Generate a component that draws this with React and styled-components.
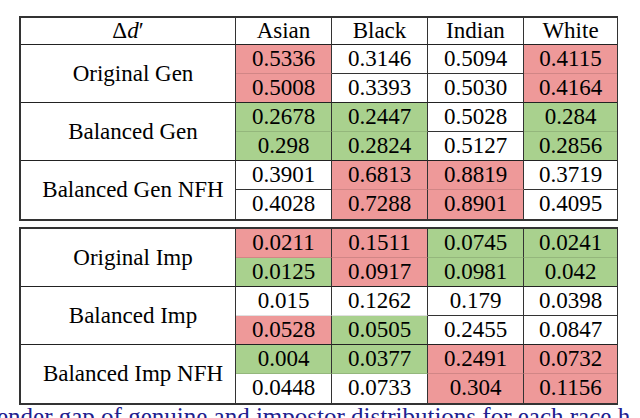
import React from "react";
import styled, { createGlobalStyle } from "styled-components";

const Global = createGlobalStyle`
  html, body {
    margin: 0;
    padding: 0;
    background: #ffffff;
  }
  body {
    width: 640px;
    height: 418px;
    overflow: hidden;
    font-family: "Liberation Serif", serif;
  }
`;

const FILLS = {
  r: "#ee9999",
  g: "#a9d18e",
  w: "#ffffff",
};

const Page = styled.div`
  width: 640px;
  height: 418px;
  overflow: hidden;
  display: flex;
  flex-direction: column;
  font-family: "Liberation Serif", serif;
`;

const TopCaption = styled.div`
  height: 16px;
  overflow: hidden;
  flex-shrink: 0;
`;

const BottomCaption = styled.div`
  flex: 1;
  min-height: 0;
  overflow: hidden;
  display: flex;
  align-items: flex-end;
`;

const CaptionText = styled.div`
  font-family: "Liberation Serif", serif;
  color: #20208f;
  font-size: 25px;
  line-height: 28px;
  white-space: nowrap;
  flex-shrink: 0;
  transform: translate(${(p) => p.$indent}px, ${(p) => p.$shift}px);
`;

const Tables = styled.div`
  display: flex;
  flex-direction: column;
  gap: 6px;
  padding-left: 19px;
  flex-shrink: 0;
`;

const Grid = styled.div`
  display: grid;
  grid-template-columns: 215px 96px 96px 96px 93px;
  grid-template-rows: ${(p) => (p.$header ? "27px " : "")}repeat(6, 29px);
  width: 599px;
  box-sizing: border-box;
  border: 2px solid #333;
  color: #000;
  font-family: "Liberation Serif", serif;
  font-size: 23px;
`;

const HeadCell = styled.div`
  display: flex;
  align-items: center;
  justify-content: center;
  background: #fff;
  border-right: ${(p) => (p.$last ? "none" : "1px solid #333")};
  border-bottom: 1px solid #222;
  box-sizing: border-box;
`;

const LabelCell = styled.div`
  grid-row: span 2;
  display: flex;
  align-items: center;
  justify-content: center;
  padding-left: 10px;
  border-right: 1px solid #333;
  border-bottom: ${(p) => (p.$end ? "none" : "1px solid #222")};
  box-sizing: border-box;
`;

const DataCell = styled.div`
  display: flex;
  align-items: center;
  justify-content: center;
  background: ${(p) => FILLS[p.$fill]};
  border-right: ${(p) => (p.$last ? "none" : "1px solid #333")};
  border-bottom: ${(p) => p.$line};
  box-sizing: border-box;
  padding-bottom: 1px;
`;

const Italic = styled.span`
  font-style: italic;
`;

const table1 = [
  {
    label: "Original Gen",
    cells: [
      [["0.5336", "r"], ["0.5008", "r"]],
      [["0.3146", "w"], ["0.3393", "w"]],
      [["0.5094", "w"], ["0.5030", "w"]],
      [["0.4115", "r"], ["0.4164", "r"]],
    ],
  },
  {
    label: "Balanced Gen",
    cells: [
      [["0.2678", "g"], ["0.298", "g"]],
      [["0.2447", "g"], ["0.2824", "g"]],
      [["0.5028", "w"], ["0.5127", "w"]],
      [["0.284", "g"], ["0.2856", "g"]],
    ],
  },
  {
    label: "Balanced Gen NFH",
    cells: [
      [["0.3901", "w"], ["0.4028", "w"]],
      [["0.6813", "r"], ["0.7288", "r"]],
      [["0.8819", "r"], ["0.8901", "r"]],
      [["0.3719", "w"], ["0.4095", "w"]],
    ],
  },
];

const table2 = [
  {
    label: "Original Imp",
    cells: [
      [["0.0211", "r"], ["0.0125", "g"]],
      [["0.1511", "r"], ["0.0917", "r"]],
      [["0.0745", "g"], ["0.0981", "g"]],
      [["0.0241", "g"], ["0.042", "g"]],
    ],
  },
  {
    label: "Balanced Imp",
    cells: [
      [["0.015", "w"], ["0.0528", "r"]],
      [["0.1262", "w"], ["0.0505", "g"]],
      [["0.179", "w"], ["0.2455", "w"]],
      [["0.0398", "w"], ["0.0847", "w"]],
    ],
  },
  {
    label: "Balanced Imp NFH",
    cells: [
      [["0.004", "g"], ["0.0448", "w"]],
      [["0.0377", "g"], ["0.0733", "w"]],
      [["0.2491", "r"], ["0.304", "r"]],
      [["0.0732", "r"], ["0.1156", "r"]],
    ],
  },
];

// line between the two values of one group: dark on white, faint on colour
const pairLine = (a, b) =>
  a === "w" && b === "w" ? "1px solid #333" : "1px solid rgba(0,0,0,0.12)";

const Group = ({ group, end }) => {
  const rows = [0, 1];
  return (
    <>
      {rows.map((r) => (
        <React.Fragment key={r}>
          {r === 0 && <LabelCell $end={end}>{group.label}</LabelCell>}
          {group.cells.map((pair, c) => {
            let line = "none";
            if (r === 0) line = pairLine(pair[0][1], pair[1][1]);
            else if (!end) line = "1px solid #222";
            return (
              <DataCell key={c} $fill={pair[r][1]} $last={c === 3} $line={line}>
                {pair[r][0]}
              </DataCell>
            );
          })}
        </React.Fragment>
      ))}
    </>
  );
};

const ResultTable = ({ groups, header }) => (
  <Grid $header={header}>
    {header && (
      <>
        <HeadCell>
          Δ<Italic>d</Italic>′
        </HeadCell>
        <HeadCell>Asian</HeadCell>
        <HeadCell>Black</HeadCell>
        <HeadCell>Indian</HeadCell>
        <HeadCell $last>White</HeadCell>
      </>
    )}
    {groups.map((g, i) => (
      <Group key={g.label} group={g} end={i === groups.length - 1} />
    ))}
  </Grid>
);

export default function App() {
  return (
    <Page>
      <Global />
      <TopCaption>
        <CaptionText $shift={-27} $indent={30}>
          using genuine and impostor pairs for race; a larger value means a stronger gap
        </CaptionText>
      </TopCaption>
      <Tables>
        <ResultTable groups={table1} header />
        <ResultTable groups={table2} />
      </Tables>
      <BottomCaption>
        <CaptionText $shift={13} $indent={-3}>
          ender gap of genuine and impostor distributions for each race h
        </CaptionText>
      </BottomCaption>
    </Page>
  );
}
